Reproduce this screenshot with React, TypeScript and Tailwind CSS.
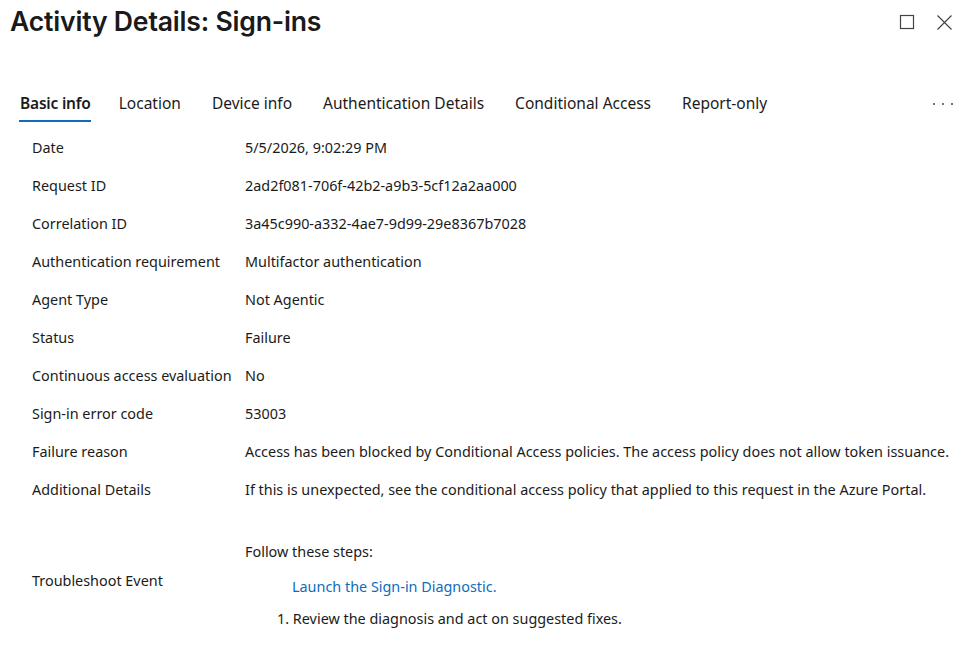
import React from "react";

const rows: { label: string; value: string }[] = [
  { label: "Date", value: "5/5/2026, 9:02:29 PM" },
  { label: "Request ID", value: "2ad2f081-706f-42b2-a9b3-5cf12a2aa000" },
  { label: "Correlation ID", value: "3a45c990-a332-4ae7-9d99-29e8367b7028" },
  { label: "Authentication requirement", value: "Multifactor authentication" },
  { label: "Agent Type", value: "Not Agentic" },
  { label: "Status", value: "Failure" },
  { label: "Continuous access evaluation", value: "No" },
  { label: "Sign-in error code", value: "53003" },
  {
    label: "Failure reason",
    value:
      "Access has been blocked by Conditional Access policies. The access policy does not allow token issuance.",
  },
  {
    label: "Additional Details",
    value:
      "If this is unexpected, see the conditional access policy that applied to this request in the Azure Portal.",
  },
];

const tabs = [
  "Basic info",
  "Location",
  "Device info",
  "Authentication Details",
  "Conditional Access",
  "Report-only",
];

export default function App() {
  return (
    <div
      className="w-[980px] h-[647px] overflow-hidden bg-white text-[#1b1b1b]"
      style={{ fontFamily: '"Noto Sans", "Open Sans", sans-serif' }}
    >
      {/* header */}
      <div className="flex items-center justify-between pl-[10px] pr-[27px] h-[44px]">
        <h1
          className="text-[26.6px] font-semibold tracking-[-0.2px] text-[#1a1a1a]"
          style={{ fontFamily: "Inter, sans-serif" }}
        >
          Activity Details: Sign-ins
        </h1>
        <div className="flex items-center gap-[21px]">
          <svg width="16" height="16" viewBox="0 0 16 16" fill="none">
            <rect x="1.5" y="1.5" width="13" height="13" stroke="#444" strokeWidth="1.2" />
          </svg>
          <svg width="17" height="17" viewBox="0 0 17 17" fill="none">
            <path d="M1.5 1.5 L15.5 15.5 M15.5 1.5 L1.5 15.5" stroke="#444" strokeWidth="1.2" />
          </svg>
        </div>
      </div>

      {/* tabs */}
      <div className="flex items-center mt-[42px] pl-[20px] pr-[27px] h-[36px]">
        <div className="flex items-center gap-[31px] text-[15.5px]">
          {tabs.map((t, i) => (
            <div
              key={t}
              className={i === 0 ? "relative h-[36px] flex items-center mr-[-3px]" : "relative h-[36px] flex items-center"}
            >
              <span className={i === 0 ? "font-semibold tracking-[-0.2px]" : ""}>{t}</span>
              {i === 0 && (
                <div className="absolute left-[-1px] right-0 bottom-0 h-[2px] bg-[#0f6cbd]" />
              )}
            </div>
          ))}
        </div>
        <div className="ml-auto flex gap-[7px] items-center">
          <span className="w-[2px] h-[2px] rounded-full bg-[#444]" />
          <span className="w-[2px] h-[2px] rounded-full bg-[#444]" />
          <span className="w-[2px] h-[2px] rounded-full bg-[#444]" />
        </div>
      </div>

      {/* rows */}
      <div className="pl-[32px] mt-[7px] text-[14.4px]">
        {rows.map((r) => (
          <div key={r.label} className="grid grid-cols-[213px_1fr] h-[38px] items-center">
            <span>{r.label}</span>
            <span className="whitespace-nowrap">{r.value}</span>
          </div>
        ))}
        <div className="grid grid-cols-[213px_1fr] items-start mt-[30px]">
          <span className="mt-[32px] leading-[20px]">Troubleshoot Event</span>
          <div className="flex flex-col">
            <span className="h-[26px] flex items-center">Follow these steps:</span>
            <a className="h-[44px] flex items-center pl-[47px] text-[#0f6cbd]">
              Launch the Sign-in Diagnostic.
            </a>
            <span className="h-[20px] flex items-center pl-[32px]">
              1. Review the diagnosis and act on suggested fixes.
            </span>
          </div>
        </div>
      </div>
    </div>
  );
}
